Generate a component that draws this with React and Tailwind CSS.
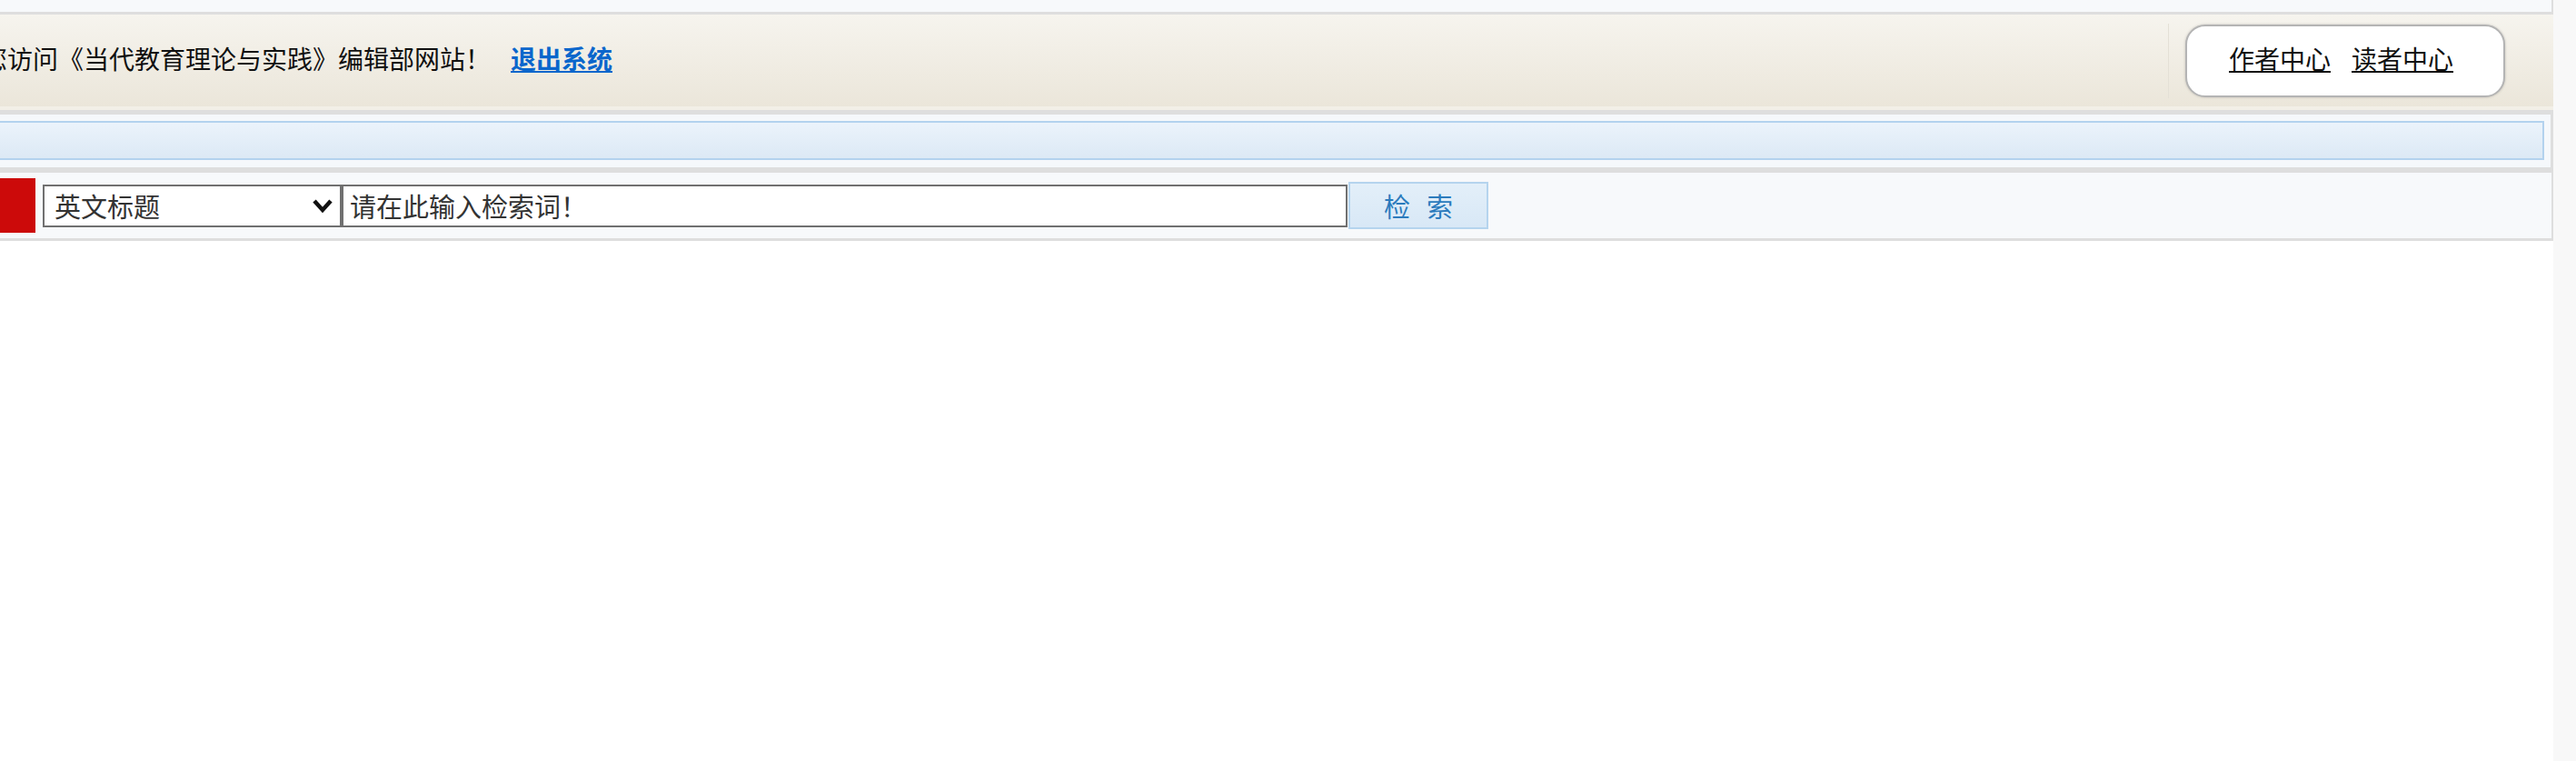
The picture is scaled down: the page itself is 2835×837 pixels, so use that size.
export default function App() {
  return (
    <div className="flex w-[2835px] h-[837px] bg-white overflow-hidden"
      style={{ fontFamily: '"Liberation Sans", "Noto Sans CJK SC", sans-serif' }}>

      {/* main column */}
      <div className="w-[2810px] shrink-0 flex flex-col">

        {/* top strip */}
        <div className="h-[16px] bg-[#f7f9fb] border-b-[3px] border-r-2 border-[#dedede]" />

        {/* header */}
        <div className="h-[105px] flex items-center bg-gradient-to-b from-[#f6f4ee] to-[#ebe6da] border-b-[4px] border-[#f2efe7]">
          <div className="w-[540px] shrink-0 overflow-hidden flex justify-end whitespace-nowrap">
            <span className="text-[28px] text-[#111]">欢迎您访问《当代教育理论与实践》编辑部网站！</span>
          </div>
          <a href="#" className="ml-[22px] text-[28px] font-bold text-[#0a66cc] underline whitespace-nowrap">退出系统</a>
          <div className="flex-1" />
          <div className="w-px h-[82px] bg-[#e4e0d6]" />
          <div className="ml-[18px] mr-[53px] w-[352px] h-[80px] rounded-[22px] border-2 border-[#b4b4b4] bg-white shadow-[0_0_3px_rgba(0,0,0,0.2)] flex items-center pl-[46px] gap-[23px]">
            <a href="#" className="text-[28px] text-[#111] underline whitespace-nowrap">作者中心</a>
            <a href="#" className="text-[28px] text-[#111] underline whitespace-nowrap">读者中心</a>
          </div>
        </div>

        {/* blue bar frame */}
        <div className="border-t-[5px] border-b-[6px] border-r-[3px] border-[#dedede] bg-[#f5f8fb] pt-[7px] pb-[8px] pr-[7px]">
          <div className="h-[43px] border-y-2 border-r-2 border-[#b3d2ee] bg-gradient-to-b from-[#ebf3fb] to-[#dce9f5]" />
        </div>

        {/* search row */}
        <div className="h-[75px] flex items-center bg-[#f7f9fb] border-b-[3px] border-r-2 border-[#dedede]"
          style={{ fontFamily: '"Noto Sans CJK SC", sans-serif' }}>
          <div className="w-[39px] h-[60px] bg-[#cc0a0a] shrink-0" />
          <div className="ml-[8px] w-[329px] h-[47px] shrink-0 border-2 border-[#707070] bg-white flex items-center justify-between pl-[11px] pr-[7px]">
            <span className="text-[29px] leading-none text-[#333]">英文标题</span>
            <svg width="24" height="18" viewBox="0 0 24 18" fill="none"
              stroke="#111" strokeWidth="4.5" strokeLinecap="butt" strokeLinejoin="miter">
              <polyline points="3 4 12 14 21 4" />
            </svg>
          </div>
          <input
            placeholder="请在此输入检索词！"
            className="w-[1107px] h-[47px] shrink-0 border-2 border-[#707070] bg-white pl-[7px] text-[29px] text-[#333] placeholder:text-[#333] outline-none"
          />
          <button className="ml-px w-[154px] h-[52px] shrink-0 border-2 border-[#b5d4ee] bg-gradient-to-b from-[#e3eff9] to-[#d8e8f6] text-[29px] leading-none text-[#2b7bbd] flex items-center justify-center gap-[18px]">
            <span>检</span>
            <span>索</span>
          </button>
        </div>

        <div className="flex-1 bg-white" />
      </div>

      {/* scrollbar strip */}
      <div className="flex-1 bg-[#f8f8f8]" />
    </div>
  )
}
